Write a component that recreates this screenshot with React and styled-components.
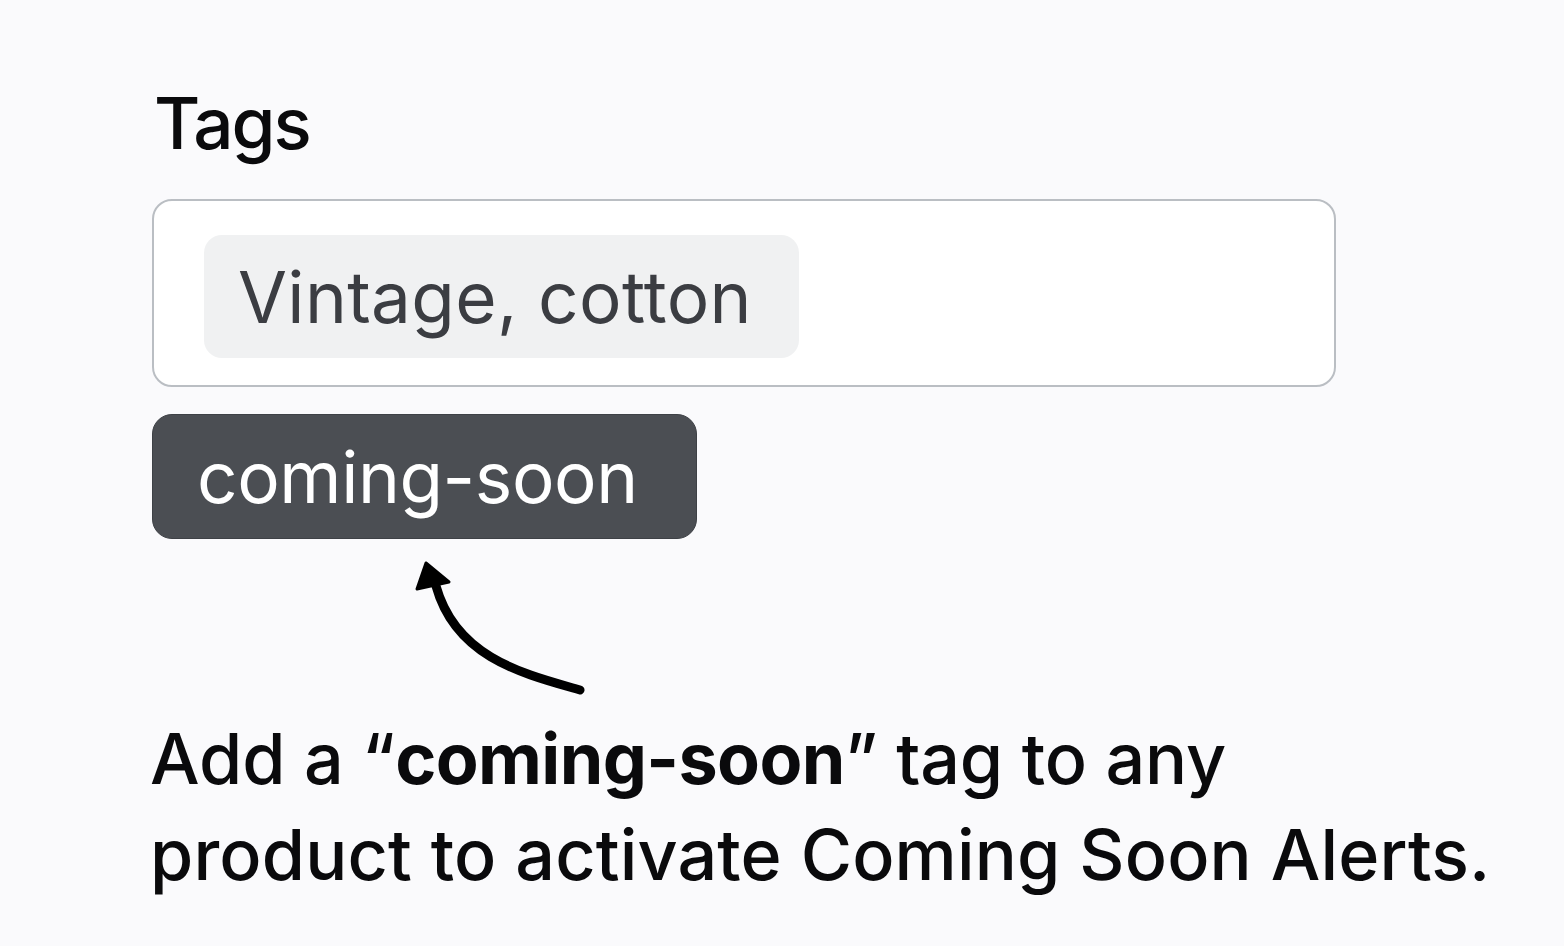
import React from 'react';
import styled, { createGlobalStyle } from 'styled-components';

const GlobalStyle = createGlobalStyle`
  html, body {
    margin: 0;
    padding: 0;
    background: #fafafc;
  }
  body {
    font-family: Inter, "Noto Sans", "Liberation Sans", sans-serif;
    color: #0d0d0f;
  }
`;

const StyledPage = styled.div`
  width: 1564px;
  height: 946px;
  box-sizing: border-box;
  padding: 88px 0 0 152px;
  background: #fafafc;
  overflow: hidden;
`;

const StyledLabel = styled.h1`
  margin: 0 0 40px 2px;
  font-size: 71px;
  line-height: 1;
  font-weight: 500;
  letter-spacing: -2px;
  color: #0a0a0c;
`;

const StyledField = styled.div`
  box-sizing: border-box;
  width: 1184px;
  height: 188px;
  padding: 34px 50px;
  display: flex;
  align-items: flex-start;
  background: #ffffff;
  border: 2px solid #babec3;
  border-radius: 20px;
`;

const StyledChip = styled.span`
  display: inline-flex;
  align-items: center;
  box-sizing: border-box;
  height: ${({ dark }) => (dark ? '125px' : '123px')};
  padding: ${({ dark }) => (dark ? '0 58px 0 44px' : '0 47px 0 34px')};
  border-radius: ${({ dark }) => (dark ? '20px' : '18px')};
  border: ${({ dark }) => (dark ? '1px solid #3e4146' : 'none')};
  background: ${({ dark }) => (dark ? '#4b4e53' : '#f0f1f2')};
  color: ${({ dark }) => (dark ? '#ffffff' : '#3b3d42')};
  font-size: 71px;
  letter-spacing: ${({ dark }) => (dark ? '-0.4px' : '0.35px')};
  font-weight: 400;
  white-space: nowrap;
`;

const StyledTagRow = styled.div`
  display: flex;
  margin-top: 27px;
`;

const StyledArrow = styled.svg`
  display: block;
  margin: 15px 0 0 252px;
`;

const StyledHint = styled.p`
  margin: 7px 0 0 -2px;
  font-size: 70px;
  line-height: 96px;
  font-weight: 500;
  letter-spacing: -0.1px;
  white-space: nowrap;
  color: #0a0a0c;

  strong {
    font-weight: 700;
    letter-spacing: -0.6px;
  }
`;

const StyledLine = styled.span`
  display: block;
  letter-spacing: ${({ wide }) => (wide ? '0.15px' : '-0.1px')};
`;

const CurvedArrow = () => (
  <StyledArrow width="190" height="150" viewBox="0 0 190 150">
    <path
      d="M176 136 C120 120 52 104 32 32"
      fill="none"
      stroke="#000"
      strokeWidth="9"
      strokeLinecap="round"
    />
    <path d="M22 9 L45 28 L13 35 Z" fill="#000" stroke="#000" strokeWidth="3" strokeLinejoin="round" />
  </StyledArrow>
);

const App = () => (
  <>
    <GlobalStyle />
    <StyledPage>
      <StyledLabel>Tags</StyledLabel>
      <StyledField>
        <StyledChip>Vintage, cotton</StyledChip>
      </StyledField>
      <StyledTagRow>
        <StyledChip dark>coming-soon</StyledChip>
      </StyledTagRow>
      <CurvedArrow />
      <StyledHint>
        <StyledLine>
          Add a “<strong>coming-soon</strong>” tag to any
        </StyledLine>
        <StyledLine wide>product to activate Coming Soon Alerts.</StyledLine>
      </StyledHint>
    </StyledPage>
  </>
);

export default App;
